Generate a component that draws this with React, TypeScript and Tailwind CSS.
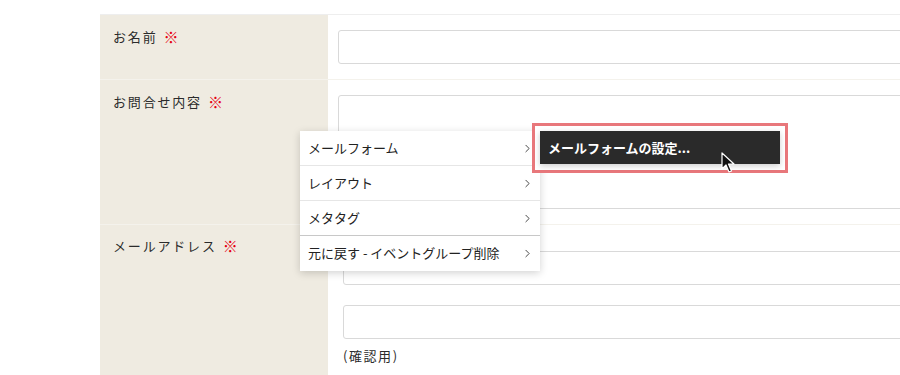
import { ChevronRight } from "lucide-react";

const Req = () => <span className="ml-[6px] align-[-1px] text-[15px] leading-none text-[#e60012]">※</span>;

const menuItems = [
  { label: "メールフォーム", divider: "border-[#e6e6e6]" },
  { label: "レイアウト", divider: "border-[#e6e6e6]" },
  { label: "メタタグ", divider: "border-[#c8c8c8]" },
  { label: "元に戻す - イベントグループ削除", divider: "border-transparent" },
];

const Cursor = () => (
  <svg width="14" height="22" viewBox="0 0 14 22" className="absolute left-[721px] top-[152px]">
    <path d="M1 1 L1 17 L5 13 L8 20 L10.5 19 L7.5 12 L13 12 Z" fill="#111" stroke="#fff" strokeWidth="1.2" strokeLinejoin="round" />
  </svg>
);

export default function App() {
  return (
    <div
      className="relative h-[375px] w-[900px] overflow-hidden bg-white text-[13px] text-[#2b2b2b]"
      style={{ fontFamily: '"Noto Sans CJK JP", "Noto Sans", sans-serif' }}
    >
      <div className="ml-[100px] mt-[14px] w-[900px] border-t border-[#eeeeee]">
        <div className="flex h-[65px] border-b border-[#f4f2ec]">
          <div className="w-[228px] shrink-0 bg-[#efebe1] px-[13px] pt-[12px] tracking-[0.14em]">
            お名前<Req />
          </div>
          <div className="flex-1 pl-[10px] pt-[15px]">
            <div className="h-[34px] rounded-[3px] border border-[#d9d9d9]" />
          </div>
        </div>
        <div className="flex h-[145px] border-b border-[#f4f2ec]">
          <div className="w-[228px] shrink-0 bg-[#efebe1] px-[13px] pt-[12px] tracking-[0.14em]">
            お問合せ内容<Req />
          </div>
          <div className="flex-1 pl-[10px] pt-[15px]">
            <div className="h-[114px] rounded-[3px] border border-[#d9d9d9]" />
          </div>
        </div>
        <div className="flex h-[160px]">
          <div className="w-[228px] shrink-0 bg-[#efebe1] px-[13px] pt-[11px] tracking-[0.14em]">
            メールアドレス<Req />
          </div>
          <div className="flex-1 pl-[15px] pt-[26px]">
            <div className="h-[34px] rounded-[3px] border border-[#d9d9d9]" />
            <div className="mt-[20px] h-[34px] rounded-[3px] border border-[#d9d9d9]" />
            <div className="mt-[7px] tracking-[0.12em]">(確認用)</div>
          </div>
        </div>
      </div>

      <div className="absolute left-[300px] top-[131px] w-[240px] bg-white shadow-[0_2px_8px_rgba(0,0,0,0.18)]">
        {menuItems.map((item) => (
          <div
            key={item.label}
            className={`flex h-[35px] items-center justify-between border-b pl-[8px] pr-[6px] text-[13px] text-[#222] ${item.divider}`}
          >
            <span>{item.label}</span>
            <ChevronRight className="h-[13px] w-[13px] text-[#444]" strokeWidth={1.8} />
          </div>
        ))}
      </div>

      <div className="absolute left-[532px] top-[123px] h-[50px] w-[256px] border-[3px] border-[#e8777b] bg-white" />
      <div className="absolute left-[540px] top-[131px] flex h-[33px] w-[240px] items-center bg-[#2a2a2a] pl-[8px] text-[13px] font-bold text-white shadow-[0_2px_6px_rgba(0,0,0,0.2)]">
        メールフォームの設定...
      </div>
      <Cursor />
    </div>
  );
}
